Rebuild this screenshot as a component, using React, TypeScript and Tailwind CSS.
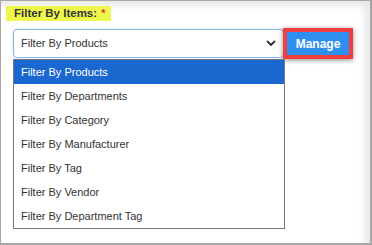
import React from "react";

const items = [
  "Filter By Products",
  "Filter By Departments",
  "Filter By Category",
  "Filter By Manufacturer",
  "Filter By Tag",
  "Filter By Vendor",
  "Filter By Department Tag",
];

export default function App() {
  return (
    <div className="relative w-[372px] h-[245px] bg-white border border-[#a6a6a6] border-r-2 border-b-2 shadow-[inset_-6px_5px_7px_rgba(0,0,0,0.09)] font-['Liberation_Sans',Arial,sans-serif] text-[#333]">
      <div className="flex pt-[5px] pl-[5px]">
        <div className="flex items-center h-[15px] pl-[8px] pr-[5px] bg-[#eef84c] text-[11.5px] font-bold leading-none text-[#333]">
          Filter By Items:<span className="ml-[4px] text-[#e53935]">*</span>
        </div>
      </div>
      <div className="flex items-center mt-[7px] pl-[12px]">
        <div className="flex items-center justify-between w-[271px] h-[29px] rounded-[4px] border border-[#86b7ea] shadow-[0_0_2px_rgba(70,140,220,0.35)] pl-[7px] pr-[6px] text-[11px] text-[#333]">
          <span>Filter By Products</span>
          <svg width="10" height="7" viewBox="0 0 10 7" className="mr-[1px]">
            <path d="M1.5 1.5 L5 5 L8.5 1.5" fill="none" stroke="#333" strokeWidth="1.8" strokeLinecap="round" strokeLinejoin="round" />
          </svg>
        </div>
        <div className="ml-[-1px] border-[4px] border-[#f13d3f] shadow-[0_1px_5px_rgba(0,0,0,0.45)]">
          <div className="flex items-center justify-center w-[62px] h-[23px] bg-[#2f8ff0] text-white text-[12px] font-bold">
            Manage
          </div>
        </div>
      </div>
      <div className="absolute left-[12px] top-[58px] w-[272px] bg-white border border-[#777] text-[11px]">
        {items.map((t, i) => (
          <div
            key={t}
            className={
              i === 0
                ? "h-[24px] flex items-center pl-[7px] bg-[#1a67d0] text-white"
                : "h-[24px] flex items-center pl-[7px] text-[#333]"
            }
          >
            {t}
          </div>
        ))}
      </div>
    </div>
  );
}
